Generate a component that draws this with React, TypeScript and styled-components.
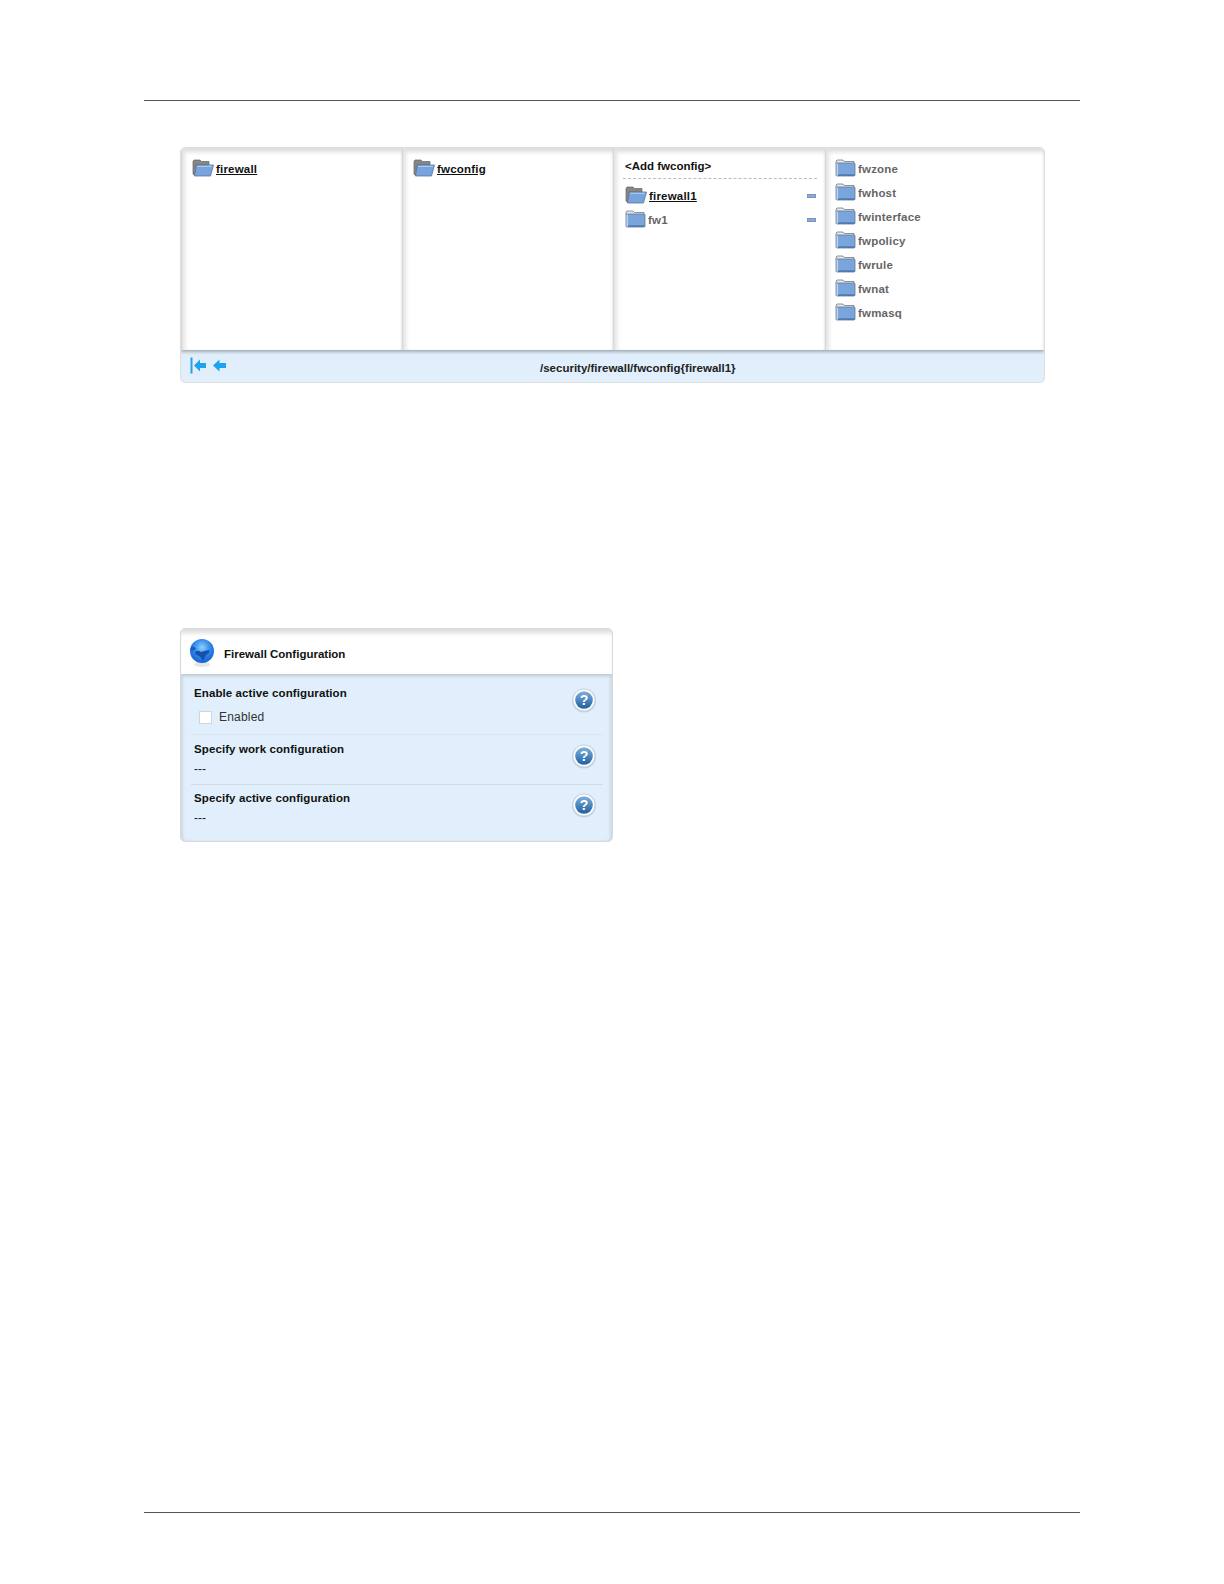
import React from 'react'
import styled, { createGlobalStyle } from 'styled-components'

const GlobalStyle = createGlobalStyle`
  html, body {
    margin: 0;
    padding: 0;
    background: #fff;
    font-family: "Liberation Sans", Arial, sans-serif;
  }
`

const Page = styled.div`
  width: 1224px;
  height: 1584px;
  box-sizing: border-box;
  padding: 100px 144px 0 144px;
  display: flex;
  flex-direction: column;
`

const Rule = styled.div`
  height: 1px;
  background: #555;
`

const Content = styled.div`
  flex: 1;
  display: flex;
  flex-direction: column;
  padding: 46px 35px 0 36px;
`

const BrowserPanel = styled.section`
  width: 865px;
  height: 236px;
  box-sizing: border-box;
  border-radius: 5px;
  overflow: hidden;
  background: #e0effb;
  border: 1px solid #dedede;
  display: flex;
  flex-direction: column;
`

const Columns = styled.div`
  height: 202px;
  display: flex;
  background: #fff;
  box-shadow: 0 2px 3px #a3abb2;
  position: relative;
`

const Column = styled.div<{ $width: number; $pad: number }>`
  width: ${({ $width }) => $width}px;
  flex: none;
  box-sizing: border-box;
  padding: 9px 8px 0 ${({ $pad }) => $pad}px;
  background: #fff;
  box-shadow: inset 5px 0 4px -2px #e2e2e2, inset 0 6px 4px -2px #dcdcdc, inset -2px 0 2px -1px #ececec;
  border-left: 1px solid #d8d8d8;
`

const AddLink = styled.div`
  font-size: 11.5px;
  font-weight: bold;
  color: #111;
  line-height: 16px;
  height: 20px;
  margin-top: 1px;
  padding-left: 2px;
  border-bottom: 1px dashed #bbb;
  margin-bottom: 5px;
`

const FolderList = styled.div`
  padding-left: 2px;
`

const FolderRow = styled.div`
  height: 24px;
  display: flex;
  align-items: center;
  gap: 2px;
  position: relative;
  svg {
    margin-top: -3px;
  }
`

const FolderLabel = styled.span<{ $active?: boolean }>`
  font-size: 11.5px;
  font-weight: bold;
  letter-spacing: 0.2px;
  color: ${({ $active }) => ($active ? '#111' : '#666')};
  text-decoration: ${({ $active }) => ($active ? 'underline' : 'none')};
`

const RemoveMark = styled.span`
  margin-left: auto;
  margin-right: 1px;
  width: 9px;
  height: 4px;
  background: #8fa6d6;
  border: 1px solid #7b93b8;
  box-sizing: border-box;
`

const PathBar = styled.div`
  flex: 1;
  display: flex;
  align-items: center;
  padding: 0 0 0 9px;
  position: relative;
`

const NavIcons = styled.div`
  display: flex;
  align-items: center;
  gap: 5px;
  margin-top: -2px;
`

const PathText = styled.div`
  position: absolute;
  left: 359px;
  top: 10px;
  font-size: 11.5px;
  font-weight: bold;
  color: #222;
  line-height: 16px;
`

const ConfigPanel = styled.section`
  margin-top: 245px;
  width: 433px;
  height: 214px;
  box-sizing: border-box;
  border-radius: 5px;
  overflow: hidden;
  border: 1px solid #d6dadd;
  background: #e0effb;
  box-shadow: inset 3px 0 3px -1px #cfd8df, inset -3px 0 3px -1px #cfd8df;
`

const ConfigHeader = styled.header`
  height: 45px;
  box-sizing: border-box;
  background: #fff;
  display: flex;
  align-items: center;
  gap: 9px;
  padding: 3px 0 0 8px;
  box-shadow: inset 0 6px 4px -2px #dcdcdc, 0 2px 3px #bfc7ce;
  position: relative;
`

const ConfigTitle = styled.h2`
  margin: 1px 0 0;
  font-size: 11.5px;
  font-weight: bold;
  color: #111;
`

const ConfigBody = styled.div`
  padding: 9px 9px 0 10px;
`

const ConfigRow = styled.div<{ $height: number; $top: number; $faint?: boolean; $last?: boolean }>`
  height: ${({ $height }) => $height}px;
  box-sizing: border-box;
  display: flex;
  justify-content: space-between;
  border-bottom: ${({ $last, $faint }) => ($last ? 'none' : `1px solid ${$faint ? '#d9e6f1' : '#cfdbe5'}`)};
  padding: ${({ $top }) => $top}px 0 0 3px;
`

const FieldLabel = styled.div`
  font-size: 11.5px;
  font-weight: bold;
  letter-spacing: 0.1px;
  color: #111;
  line-height: 14px;
`

const FieldValue = styled.div`
  font-size: 12px;
  color: #222;
  line-height: 14px;
  margin-top: 6px;
`

const CheckRow = styled.label`
  display: flex;
  align-items: center;
  gap: 7px;
  margin: 10px 0 0 5px;
  font-size: 12px;
  letter-spacing: 0.2px;
  color: #333;
`

const CheckBox = styled.span`
  width: 13px;
  height: 13px;
  box-sizing: border-box;
  background: #fff;
  border: 1px solid #cfd5da;
`

const HelpWrap = styled.div`
  width: 26px;
  height: 26px;
  margin: 1px 6px 0 0;
  flex: none;
`

const ClosedFolder: React.FC = () => (
  <svg width="21" height="18" viewBox="0 0 21 18">
    <path d="M1 4 V2 L2 1 H8 L9.5 2.5 H19 V5 H1 Z" fill="#e6e6e6" stroke="#7a7a7a" strokeWidth="0.8" />
    <rect x="1" y="4" width="19" height="13" rx="1" fill="#7aa5da" stroke="#5a7ba6" strokeWidth="0.8" />
    <rect x="1.5" y="4.5" width="1.6" height="12" fill="#bcd0e8" />
    <rect x="3" y="15.4" width="16.6" height="1.4" fill="#4e72a6" />
  </svg>
)

const OpenFolder: React.FC = () => (
  <svg width="22" height="18" viewBox="0 0 22 18">
    <path d="M1 2.5 L2 1 H8 L9.5 2.5 H17 V6 H4 L3 16.5 H2.5 L1 15 Z" fill="#868686" stroke="#666" strokeWidth="0.7" />
    <path d="M4.5 6 H21.5 L18.5 17 H2.5 Z" fill="#78a3dc" stroke="#56779f" strokeWidth="0.8" />
    <path d="M5.3 6.8 H20 L19.6 8 H5 Z" fill="#a9c7ea" />
  </svg>
)

const FirstIcon: React.FC = () => (
  <svg width="17" height="17" viewBox="0 0 17 17">
    <rect x="0.5" y="0.5" width="2" height="16" fill="#2a9fe8" />
    <path d="M4 8.5 L10 2.5 V6 H16 V11 H10 V14.5 Z" fill="#1ea4ef" />
  </svg>
)

const BackIcon: React.FC = () => (
  <svg width="15" height="17" viewBox="0 0 15 17">
    <path d="M1 8.5 L7.5 2.5 V6 H14 V11 H7.5 V14.5 Z" fill="#1ea4ef" />
  </svg>
)

const GlobeIcon: React.FC = () => (
  <svg width="26" height="30" viewBox="0 0 26 30">
    <defs>
      <radialGradient id="globeSea" cx="50%" cy="35%" r="65%">
        <stop offset="0%" stopColor="#8fd0fb" />
        <stop offset="55%" stopColor="#2f86ea" />
        <stop offset="100%" stopColor="#1a5fd0" />
      </radialGradient>
    </defs>
    <ellipse cx="13" cy="26.5" rx="8" ry="2.5" fill="#e3e7ea" />
    <circle cx="13" cy="13" r="12" fill="url(#globeSea)" />
    <path d="M6 14 C8 12 10 13 12 14 C14 13 17 13 20 12 C21 14 19 16 17 17 C16 19 15 21 14 23 C13 21 12 19 10 18 C8 17 6 16 6 14 Z" fill="#1650ae" />
    <path d="M2 9 C4 8 6 9 7 11 C5 13 3 13 1.5 12 Z" fill="#1a5cc0" />
  </svg>
)

const HelpIcon: React.FC<{ id: string }> = ({ id }) => (
  <svg width="26" height="26" viewBox="0 0 26 26">
    <defs>
      <linearGradient id={id} x1="0" y1="0" x2="0" y2="1">
        <stop offset="0%" stopColor="#7fb2de" />
        <stop offset="100%" stopColor="#1f5f9f" />
      </linearGradient>
    </defs>
    <circle cx="13" cy="13.5" r="12" fill="#c4d2dd" />
    <circle cx="13" cy="13" r="10.6" fill="#fff" />
    <circle cx="13" cy="13" r="8.8" fill={`url(#${id})`} />
    <text x="13" y="18" textAnchor="middle" fontSize="14" fontWeight="bold" fontFamily="Liberation Sans" fill="#fff">?</text>
  </svg>
)

const Folder: React.FC<{ label: string; active?: boolean; removable?: boolean }> = ({ label, active, removable }) => (
  <FolderRow>
    {active ? <OpenFolder /> : <ClosedFolder />}
    <FolderLabel $active={active}>{label}</FolderLabel>
    {removable && <RemoveMark />}
  </FolderRow>
)

const BottomRule = styled.div`
  height: 1px;
  background: #555;
  margin: 0 -35px 71px -36px;
`

const Spacer = styled.div`
  flex: 1;
`

const App: React.FC = () => {
  return (
    <>
      <GlobalStyle />
      <Page>
        <Rule />
        <Content>
          <BrowserPanel>
            <Columns>
              <Column $width={221} $pad={10}>
                <Folder label="firewall" active />
              </Column>
              <Column $width={211} $pad={10}>
                <Folder label="fwconfig" active />
              </Column>
              <Column $width={212} $pad={9}>
                <AddLink>{'<Add fwconfig>'}</AddLink>
                <FolderList>
                  <Folder label="firewall1" active removable />
                  <Folder label="fw1" removable />
                </FolderList>
              </Column>
              <Column $width={219} $pad={9}>
                {['fwzone', 'fwhost', 'fwinterface', 'fwpolicy', 'fwrule', 'fwnat', 'fwmasq'].map((name) => (
                  <Folder key={name} label={name} />
                ))}
              </Column>
            </Columns>
            <PathBar>
              <NavIcons>
                <FirstIcon />
                <BackIcon />
              </NavIcons>
              <PathText>/security/firewall/fwconfig{'{firewall1}'}</PathText>
            </PathBar>
          </BrowserPanel>

          <ConfigPanel>
            <ConfigHeader>
              <GlobeIcon />
              <ConfigTitle>Firewall Configuration</ConfigTitle>
            </ConfigHeader>
            <ConfigBody>
              <ConfigRow $height={52} $top={3} $faint>
                <div>
                  <FieldLabel>Enable active configuration</FieldLabel>
                  <CheckRow>
                    <CheckBox />
                    Enabled
                  </CheckRow>
                </div>
                <HelpWrap>
                  <HelpIcon id="helpA" />
                </HelpWrap>
              </ConfigRow>
              <ConfigRow $height={50} $top={7}>
                <div>
                  <FieldLabel>Specify work configuration</FieldLabel>
                  <FieldValue>---</FieldValue>
                </div>
                <HelpWrap>
                  <HelpIcon id="helpB" />
                </HelpWrap>
              </ConfigRow>
              <ConfigRow $height={50} $top={6} $last>
                <div>
                  <FieldLabel>Specify active configuration</FieldLabel>
                  <FieldValue>---</FieldValue>
                </div>
                <HelpWrap>
                  <HelpIcon id="helpC" />
                </HelpWrap>
              </ConfigRow>
            </ConfigBody>
          </ConfigPanel>
          <Spacer />
          <BottomRule />
        </Content>
      </Page>
    </>
  )
}

export default App
